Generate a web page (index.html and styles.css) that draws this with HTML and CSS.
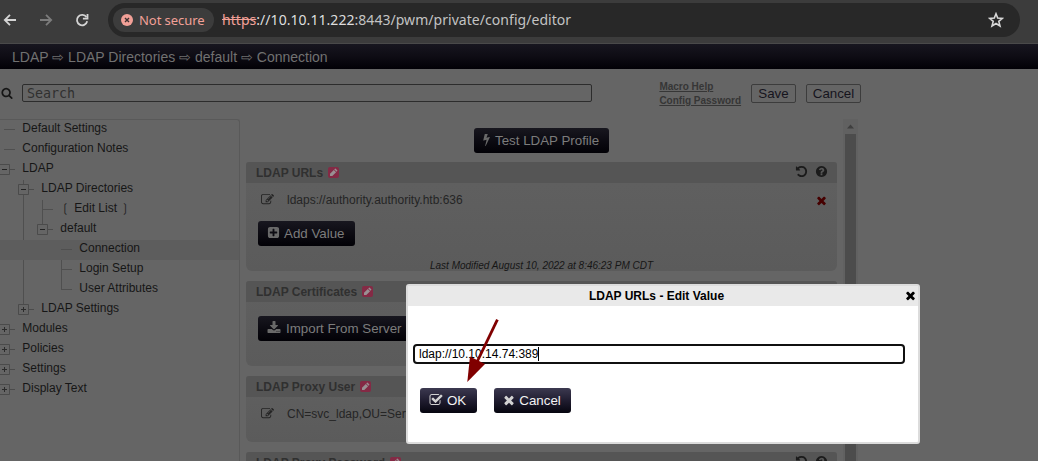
FILE: index.html
```html
<!DOCTYPE html>
<html lang="en">
<head>
<meta charset="utf-8">
<title>Configuration Editor</title>
<link rel="stylesheet" href="styles.css">
</head>
<body>
<svg class="sprite" aria-hidden="true">
  <symbol id="edit" viewBox="0 0 1792 1792"><path d="M888 1184l116-116-152-152-116 116v56h96v96h56zm440-720q-16-16-33 1l-350 350q-17 17-1 33t33-1l350-350q17-17 1-33zm80 594v190q0 119-84.5 203.5t-203.5 84.5h-832q-119 0-203.5-84.5t-84.5-203.5v-832q0-119 84.5-203.5t203.5-84.5h832q63 0 117 25 15 7 18 23 3 17-9 29l-49 49q-14 14-32 8-23-6-45-6h-832q-66 0-113 47t-47 113v832q0 66 47 113t113 47h832q66 0 113-47t47-113v-126q0-13 9-22l64-64q15-15 35-7t20 29zm-96-738l288 288-672 672h-288v-288zm444 132l-92 92-288-288 92-92q28-28 68-28t68 28l152 152q28 28 28 68t-28 68z"/></symbol>
  <symbol id="times" viewBox="0 0 1792 1792"><path d="M1490 1322q0 40-28 68l-136 136q-28 28-68 28t-68-28l-294-294-294 294q-28 28-68 28t-68-28l-136-136q-28-28-28-68t28-68l294-294-294-294q-28-28-28-68t28-68l136-136q28-28 68-28t68 28l294 294 294-294q28-28 68-28t68 28l136 136q28 28 28 68t-28 68l-294 294 294 294q28 28 28 68z"/></symbol>
  <symbol id="search" viewBox="0 0 1792 1792"><path d="M1216 832q0-185-131.5-316.5t-316.5-131.5-316.5 131.5-131.5 316.5 131.5 316.5 316.5 131.5 316.5-131.5 131.5-316.5zm512 832q0 52-38 90t-90 38q-54 0-90-38l-343-342q-179 124-399 124-143 0-273.5-55.5t-225-150-150-225-55.5-273.5 55.5-273.5 150-225 225-150 273.5-55.5 273.5 55.5 225 150 150 225 55.500 273.500q0 220-124 399l343 343q37 37 37 90z"/></symbol>
  <symbol id="undo" viewBox="0 0 1792 1792"><path d="M1664 896q0 156-61 298t-164 245-245 164-298 61q-172 0-327-72.5t-264-204.5q-7-10-6.5-22.5t8.5-20.5l137-138q10-9 25-9 16 2 23 12 73 95 179 147t225 52q104 0 198.5-40.5t163.5-109.5 109.5-163.5 40.5-198.5-40.5-198.5-109.5-163.5-163.5-109.5-198.5-40.5q-98 0-188 35.5t-160 101.5l137 138q31 30 14 69-17 40-59 40h-448q-26 0-45-19t-19-45v-448q0-42 40-59 39-17 69 14l130 129q107-101 244.5-156.5t284.5-55.5q156 0 298 61t245 164 164 245 61 298z"/></symbol>
  <symbol id="question" viewBox="0 0 1792 1792"><path d="M1024 1376v-192q0-14-9-23t-23-9h-192q-14 0-23 9t-9 23v192q0 14 9 23t23 9h192q14 0 23-9t9-23zm256-672q0-88-55.5-163t-138.5-116-170-41q-243 0-371 213-15 24 8 42l132 100q7 6 19 6 16 0 25-12 53-68 86-92 34-24 86-24 48 0 85.5 26t37.5 59q0 38-20 61t-68 45q-63 28-115.5 86.5t-52.5 125.5v36q0 14 9 23t23 9h192q14 0 23-9t9-23q0-19 21.5-49.5t54.5-49.5q32-18 49-28.5t46-35 44.5-48 28-60.5 12.5-81zm384 192q0 209-103 385.5t-279.5 279.5-385.5 103-385.5-103-279.5-279.5-103-385.5 103-385.5 279.5-279.5 385.5-103 385.5 103 279.5 279.5 103 385.5z"/></symbol>
  <symbol id="plus" viewBox="0 0 1792 1792"><path d="M1408 960v-128q0-26-19-45t-45-19h-320v-320q0-26-19-45t-45-19h-128q-26 0-45 19t-19 45v320h-320q-26 0-45 19t-19 45v128q0 26 19 45t45 19h320v320q0 26 19 45t45 19h128q26 0 45-19t19-45v-320h320q26 0 45-19t19-45zm256-544v960q0 119-84.5 203.5t-203.5 84.5h-960q-119 0-203.5-84.5t-84.5-203.5v-960q0-119 84.5-203.5t203.5-84.5h960q119 0 203.5 84.5t84.5 203.5z"/></symbol>
  <symbol id="bolt" viewBox="448 0 896 1792"><path d="M1333 566q18 20 7 44l-540 1157q-13 25-42 25-4 0-14-2-17-5-25.5-19t-4.5-30l197-808-406 101q-4 1-12 1-18 0-31-11-18-15-13-39l201-825q4-14 16-23t28-9h328q19 0 32 12.5t13 29.5q0 8-5 18l-171 463 396-98q8-2 12-2 19 0 34 15z"/></symbol>
  <symbol id="download" viewBox="0 0 1792 1792"><path d="M1344 1344q0-26-19-45t-45-19-45 19-19 45 19 45 45 19 45-19 19-45zm256 0q0-26-19-45t-45-19-45 19-19 45 19 45 45 19 45-19 19-45zm128-224v320q0 40-28 68t-68 28h-1472q-40 0-68-28t-28-68v-320q0-40 28-68t68-28h465l135 136q58 56 136 56t136-56l136-136h464q40 0 68 28t28 68zm-325-569q17 41-14 70l-448 448q-18 19-45 19t-45-19l-448-448q-31-29-14-70 17-39 59-39h256v-448q0-26 19-45t45-19h256q26 0 45 19t19 45v448h256q42 0 59 39z"/></symbol>
  <symbol id="check" viewBox="0 0 1792 1792"><path d="M1472 930v318q0 119-84.5 203.5t-203.5 84.5h-832q-119 0-203.5-84.5t-84.5-203.5v-832q0-119 84.5-203.5t203.5-84.5h832q63 0 117 25 15 7 18 23 3 17-9 29l-49 49q-10 10-23 10-3 0-9-2-23-6-45-6h-832q-66 0-113 47t-47 113v832q0 66 47 113t113 47h832q66 0 113-47t47-113v-254q0-13 9-22l64-64q10-10 23-10 6 0 12 3 20 8 20 29zm231-489l-814 814q-24 24-57 24t-57-24l-430-430q-24-24-24-57t24-57l110-110q24-24 57-24t57 24l263 263 647-647q24-24 57-24t57 24l110 110q24 24 24 57t-24 57z"/></symbol>
  <symbol id="modified" viewBox="0 0 11 11"><rect width="11" height="11" rx="2" fill="#842a45"/><path d="M2 9V6.700l3.800-3.800 2.300 2.300L4.300 9zM6.300 2.400l.6-.6q.4-.4.8 0l1.500 1.500q.4.4 0 .8l-.6.6z" fill="#999093"/></symbol>
  <symbol id="minus-box" viewBox="0 0 17 11"><path d="M.5.5h10v10H.5zM11 5.500h5" fill="none" stroke="#4b4b4b"/><path d="M3 5.500h5" stroke="#222"/></symbol>
  <symbol id="plus-box" viewBox="0 0 17 11"><path d="M.5.5h10v10H.5zM11 5.500h5" fill="none" stroke="#4b4b4b"/><path d="M3 5.500h5M5.500 3v5" stroke="#2b2b2b"/></symbol>
</svg>

<header class="browser">
  <svg class="nav" width="96" height="20" viewBox="0 0 96 20" fill="none" stroke-width="1.8">
    <path d="M16 10H5M10 4.800 4.800 10l5.200 5.200" stroke="#d4d4d4"/>
    <path d="M40 10h11M46 4.800 51.200 10 46 15.200" stroke="#7c7c7c"/>
    <path d="M86.500 7.200A5.200 5.200 0 1 0 87.200 11.300" stroke="#d4d4d4"/>
    <path d="M87.500 4v4.600h-4.600" stroke="#d4d4d4"/>
  </svg>
  <div class="omnibox">
    <span class="chip">
      <svg width="12" height="12" viewBox="0 0 12 12"><circle cx="6" cy="6" r="6" fill="#f2a097"/><path d="M4 4l4 4M8 4 4 8" stroke="#3c3030" stroke-width="1.400"/></svg>
      <span>Not secure</span>
    </span>
    <span class="url"><s>https</s><span class="host">://10.10.11.222</span>:8443/pwm/private/config/editor</span>
    <svg class="star" width="16" height="16" viewBox="0 0 16 16"><path d="M8 1.800l1.700 4.300 4.700.3-3.600 3 1.200 4.600L8 11.500 4 14l1.200-4.600-3.600-3 4.700-.3z" fill="none" stroke="#d8d8d8" stroke-width="1.600"/></svg>
  </div>
</header>

<nav class="crumbs">LDAP ⇨ LDAP Directories ⇨ default ⇨ Connection</nav>

<div class="toolbar">
  <svg class="search-icon" width="12" height="12"><use href="#search"/></svg>
  <div class="search">Search</div>
  <div class="links"><a>Macro Help</a><a>Config Password</a></div>
  <button class="plain save">Save</button>
  <button class="plain">Cancel</button>
</div>

<main class="content">
  <aside class="tree">
    <div class="row l0"><svg class="guide"><path d="M4 9.500h11"/></svg>Default Settings</div>
    <div class="row l0"><svg class="guide"><path d="M4 9.500h11"/></svg>Configuration Notes</div>
    <div class="row l0"><svg class="guide"><use href="#minus-box" x="-1" y="4" width="17" height="11"/></svg>LDAP</div>
    <div class="row l1"><svg class="guide"><path d="M23.500 0v4M23.500 15v5"/><use href="#minus-box" x="18" y="4" width="17" height="11"/></svg>LDAP Directories</div>
    <div class="row l2"><svg class="guide"><path d="M23.500 0v20M42.500 0v20M42 9.500h11"/></svg><span class="paren">❲</span>Edit List<span class="paren end">❳</span></div>
    <div class="row l2"><svg class="guide"><path d="M23.500 0v20M42.500 0v4"/><use href="#minus-box" x="37" y="4" width="17" height="11"/></svg>default</div>
    <div class="row l3 selected"><svg class="guide"><path d="M61 9.500h11"/></svg>Connection</div>
    <div class="row l3"><svg class="guide"><path d="M23.500 0v20M61.500 0v20M61 9.500h11"/></svg>Login Setup</div>
    <div class="row l3"><svg class="guide"><path d="M23.500 0v20M61.500 0v10M61 9.500h11"/></svg>User Attributes</div>
    <div class="row l1"><svg class="guide"><path d="M23.500 0v4"/><use href="#plus-box" x="18" y="4" width="17" height="11"/></svg>LDAP Settings</div>
    <div class="row l0"><svg class="guide"><use href="#plus-box" x="-1" y="4" width="17" height="11"/></svg>Modules</div>
    <div class="row l0"><svg class="guide"><use href="#plus-box" x="-1" y="4" width="17" height="11"/></svg>Policies</div>
    <div class="row l0"><svg class="guide"><use href="#plus-box" x="-1" y="4" width="17" height="11"/></svg>Settings</div>
    <div class="row l0"><svg class="guide"><use href="#plus-box" x="-1" y="4" width="17" height="11"/></svg>Display Text</div>
  </aside>

  <div class="settings">
    <button class="dark test"><svg width="7" height="13"><use href="#bolt"/></svg>Test LDAP Profile</button>

    <section class="card urls">
      <h2>LDAP URLs <svg width="11" height="11"><use href="#modified"/></svg>
        <span class="tools"><svg width="13" height="13"><use href="#undo"/></svg><svg width="13" height="13"><use href="#question"/></svg></span></h2>
      <div class="value"><svg width="13" height="13"><use href="#edit"/></svg>ldaps://authority.authority.htb:636<svg class="remove" width="13" height="13"><use href="#times"/></svg></div>
      <button class="dark"><svg width="13" height="13"><use href="#plus"/></svg>Add Value</button>
      <p class="stamp">Last Modified August 10, 2022 at 8:46:23 PM CDT</p>
    </section>

    <section class="card certs">
      <h2>LDAP Certificates <svg width="11" height="11"><use href="#modified"/></svg></h2>
      <button class="dark import"><svg width="14" height="14"><use href="#download"/></svg>Import From Server</button>
    </section>

    <section class="card user">
      <h2>LDAP Proxy User <svg width="11" height="11"><use href="#modified"/></svg></h2>
      <div class="value"><svg width="13" height="13"><use href="#edit"/></svg>CN=svc_ldap,OU=Service</div>
    </section>

    <section class="card password">
      <h2>LDAP Proxy Password <svg width="11" height="11"><use href="#modified"/></svg>
        <span class="tools"><svg width="13" height="13"><use href="#undo"/></svg><svg width="13" height="13"><use href="#question"/></svg></span></h2>
    </section>
  </div>

  <div class="scrollbar"><svg width="15" height="15"><path d="M4 9.500 7.500 5.500 11 9.500z" fill="#3f3f3f"/></svg><div class="thumb"></div></div>
</main>

<div class="dialog">
  <div class="dialog-title"><span>LDAP URLs - Edit Value</span><svg class="close" width="13" height="13"><use href="#times"/></svg></div>
  <div class="field">ldap://10.10.14.74:389<span class="caret"></span></div>
  <div class="actions">
    <button class="dark bright"><svg width="14" height="14"><use href="#check"/></svg>OK</button>
    <button class="dark bright"><svg class="cross" width="14" height="14"><use href="#times"/></svg>Cancel</button>
  </div>
</div>

<svg class="arrow" width="40" height="70" viewBox="0 0 40 70"><path d="M37.400 4.700 17.500 46" stroke="#800000" stroke-width="2.800"/><path d="M7.300 67 10 41.500 25 49z" fill="#800000"/></svg>
</body>
</html>
```

FILE: styles.css
```css
* { box-sizing: border-box; }
body {
  margin: 0;
  width: 1038px;
  height: 461px;
  overflow: hidden;
  display: flex;
  flex-direction: column;
  background: #656565;
  color: #161616;
  font: 12px/14px "Liberation Sans", Arial, sans-serif;
}
svg { fill: currentColor; flex: none; }
.sprite { position: absolute; width: 0; height: 0; }

.browser {
  flex: none;
  height: 44px;
  padding: 3px 18px 6px 0;
  display: flex;
  background: #3c3c3c;
  border-bottom: 1px solid #4a4a4a;
  font-family: "Noto Sans", sans-serif;
}
.nav { margin-top: 7px; fill: none; }
.omnibox {
  flex: 1;
  height: 34px;
  margin-left: 12px;
  padding: 0 16px 0 5px;
  display: flex;
  align-items: center;
  border-radius: 17px;
  background: #282828;
}
.chip {
  width: 101px;
  height: 24px;
  padding-left: 8px;
  display: flex;
  align-items: center;
  gap: 6px;
  border-radius: 12px;
  background: #3c3c3c;
  color: #f2a097;
  font-size: 13px;
  letter-spacing: -0.05px;
  white-space: nowrap;
}
.url { flex: 1; margin-left: 8px; color: #c3c3c3; font-size: 14px; letter-spacing: 0.045px; }
.url s { color: #f2a097; }
.host { color: #dedede; }

.crumbs {
  flex: none;
  height: 25px;
  padding-left: 12px;
  background: linear-gradient(#17161f, #0e0c14 50%, #020106);
  color: #717171;
  font-size: 14px;
  line-height: 26px;
}

.toolbar { flex: none; height: 50px; padding-top: 15px; display: flex; align-items: flex-start; }
.search-icon { margin: 3px 0 0 1px; color: #161616; }
.search {
  width: 570px;
  height: 18px;
  margin-left: 9px;
  padding-left: 4px;
  border: 1px solid #2c2c2c;
  border-radius: 2px;
  color: #303030;
  font: 13.333px/17px "DejaVu Sans Mono", monospace;
}
.links {
  width: 92px;
  margin: -4px 0 0 67px;
  padding-left: 0.4px;
  display: flex;
  flex-direction: column;
  color: #363636;
  font-size: 10px;
  font-weight: bold;
  text-decoration: underline;
}
button { margin: 0; font: 13.333px/15px "Liberation Sans", Arial, sans-serif; white-space: nowrap; }
.plain {
  width: 55px;
  height: 19px;
  padding: 0;
  border: 1px solid #3c3c3c;
  border-radius: 2px;
  background: transparent;
  color: #15141d;
}
.save { width: 45px; margin-right: 10px; }

.content { flex: 1; min-height: 0; display: flex; align-items: stretch; }
.tree { width: 240px; border: 1px solid #595959; border-bottom: 0; border-left: 0; border-radius: 0 3px 0 0; }
.row { height: 20px; display: flex; line-height: 16px; }
.guide { height: 20px; fill: none; stroke: #4f4f4f; overflow: hidden; }
.l0 .guide { width: 22.300px; }
.l1 .guide { width: 41.300px; }
.l2 .guide { width: 60.300px; }
.l3 .guide { width: 79.300px; }
.selected { background: #5d5d5d; }
.paren { width: 14px; color: #242424; font-family: "DejaVu Sans", sans-serif; }
.end { padding-left: 3px; }

.settings { width: 597px; padding: 9px 0 0 6px; overflow: hidden; display: flex; flex-direction: column; }
.dark {
  height: 25px;
  padding: 0 10px;
  display: inline-flex;
  align-items: center;
  gap: 4px;
  border: 0;
  border-radius: 3px;
  background: linear-gradient(#18171f, #0c0b12 50%, #020106);
  color: #7c7c7c;
}
.dark svg { margin: -2px 0 0 -1px; color: #696969; }
.test { flex: none; align-self: center; width: 135px; margin-bottom: 9px; gap: 5px; }
.card {
  flex: none;
  margin-bottom: 10px;
  border-radius: 3px 3px 6px 6px;
  background: linear-gradient(#606060, #5b5b5b);
}
.card h2 {
  height: 21px;
  margin: 0;
  padding: 0 9px 0 10px;
  display: flex;
  align-items: center;
  gap: 5px;
  border-radius: 3px 3px 0 0;
  background: #555;
  color: #303030;
  font-size: 12px;
}
.tools { margin: -2px 0 0 auto; display: flex; gap: 7px; color: #1b1b1b; }
.value { height: 34px; padding: 0 9px 0 15px; display: flex; align-items: center; color: #252525; }
.value svg { margin: -1px 13px 0 0; }
.value .remove { margin: 0 0 0 auto; color: #460000; }
.card .dark { margin-left: 12px; }
.urls { height: 109px; }
.urls .dark { margin-top: 4px; width: 97px; }
.stamp { margin: 13px 0 0; text-align: center; font-size: 10px; font-style: italic; }
.certs { height: 85px; }
.certs .dark { margin-top: 14px; gap: 5px; }
.user { height: 66px; }
.password { height: 66px; }

.scrollbar { width: 15px; margin-left: 6px; display: flex; flex-direction: column; align-items: center; background: #616161; }
.thumb { flex: 1; width: 11px; background: #4c4c4c; }

.dialog {
  position: absolute;
  left: 406px;
  top: 284px;
  width: 514px;
  height: 160px;
  border: 2px solid #dcdcdc;
  border-radius: 3px;
  background: #fff;
  color: #000;
}
.dialog-title { height: 20px; padding-right: 1px; display: flex; align-items: center; background: #e9e9e9; font-weight: bold; }
.dialog-title span { flex: 1; padding-left: 1px; text-align: center; }
.close { margin-top: -2px; }
.field {
  height: 20px;
  width: 492px;
  margin: 38px 0 0 5px;
  padding: 0 4px;
  display: flex;
  align-items: center;
  border: 2px solid #101010;
  border-radius: 4px;
}
.caret { width: 1px; height: 14px; background: #000; }
.actions { display: flex; gap: 17px; margin: 24px 0 0 12px; }
.bright { padding-right: 11px; background: linear-gradient(#3c3950, #201d30 50%, #06050f); color: #f2f2f2; }
.bright svg { color: #d2d2d2; }
.dark .cross { margin: -1px -1px 0 -2px; }
.bright:last-child { width: 77px; }

.arrow { position: absolute; left: 460px; top: 315px; }
```
